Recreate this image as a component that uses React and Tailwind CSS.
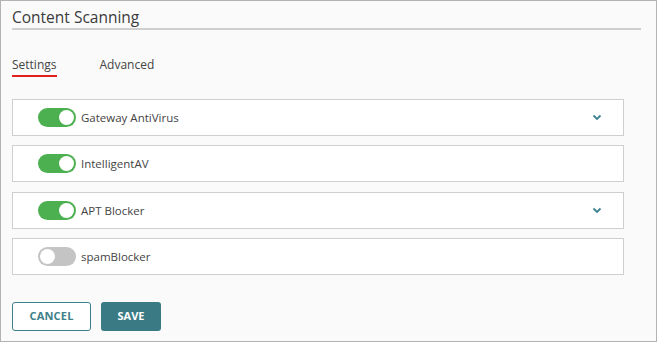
import React, { useState } from "react";

function Toggle({ on }) {
  return (
    <div
      className={`w-[38px] h-[19px] rounded-full p-[2px] flex items-center ${
        on ? "bg-[#4caf50] justify-end" : "bg-[#c4c4c4] justify-start"
      }`}
    >
      <div className="w-[15px] h-[15px] rounded-full bg-white" />
    </div>
  );
}

function Chevron() {
  return (
    <svg width="10" height="7" viewBox="0 0 10 7" fill="none">
      <path d="M1.5 1.5 L5 5 L8.5 1.5" stroke="#3d8291" strokeWidth="1.8" />
    </svg>
  );
}

const services = [
  { name: "Gateway AntiVirus", on: true, expand: true },
  { name: "IntelligentAV", on: true, expand: false },
  { name: "APT Blocker", on: true, expand: true },
  { name: "spamBlocker", on: false, expand: false },
];

export default function App() {
  const [tab] = useState("settings");

  return (
    <div
      className="w-[657px] h-[342px] border border-[#b3b3b3] bg-[#fafafa] pl-[11px] pr-[15px] text-[#444]"
      style={{ fontFamily: '"Open Sans", sans-serif' }}
    >
      <div className="h-[29px] border-b-2 border-[#cfcfcf] flex items-end pb-[3px]">
        <h1 className="text-[15.5px] leading-none text-[#3a3a3a]">Content Scanning</h1>
      </div>

      {/* tabs */}
      <div className="flex gap-[43px] mt-[27px] text-[12px] leading-[16px]">
        <div className={tab === "settings" ? "border-b-2 border-[#e0201c] pb-[2px]" : ""}>
          Settings
        </div>
        <div>Advanced</div>
      </div>

      {/* services */}
      <div className="flex flex-col gap-[9.33px] mt-[22px] w-[612px]">
        {services.map((s) => (
          <div
            key={s.name}
            className="h-[37px] bg-white border border-[#cfcfcf] flex items-center pl-[25px] pr-[21px]"
          >
            <Toggle on={s.on} />
            <span className="ml-[5px] text-[11.5px] text-[#444]">{s.name}</span>
            {s.expand && (
              <div className="ml-auto flex items-center">
                <Chevron />
              </div>
            )}
          </div>
        ))}
      </div>

      {/* buttons */}
      <div className="flex gap-[10px] mt-[27px]">
        <button className="w-[79px] h-[29px] border border-[#3d7f88] rounded-[3px] bg-white text-[#3d7f88] text-[11px] font-bold tracking-[0.2px]">
          CANCEL
        </button>
        <button className="w-[60px] h-[29px] rounded-[3px] bg-[#3a7a85] text-white text-[11px] font-bold">
          SAVE
        </button>
      </div>
    </div>
  );
}
